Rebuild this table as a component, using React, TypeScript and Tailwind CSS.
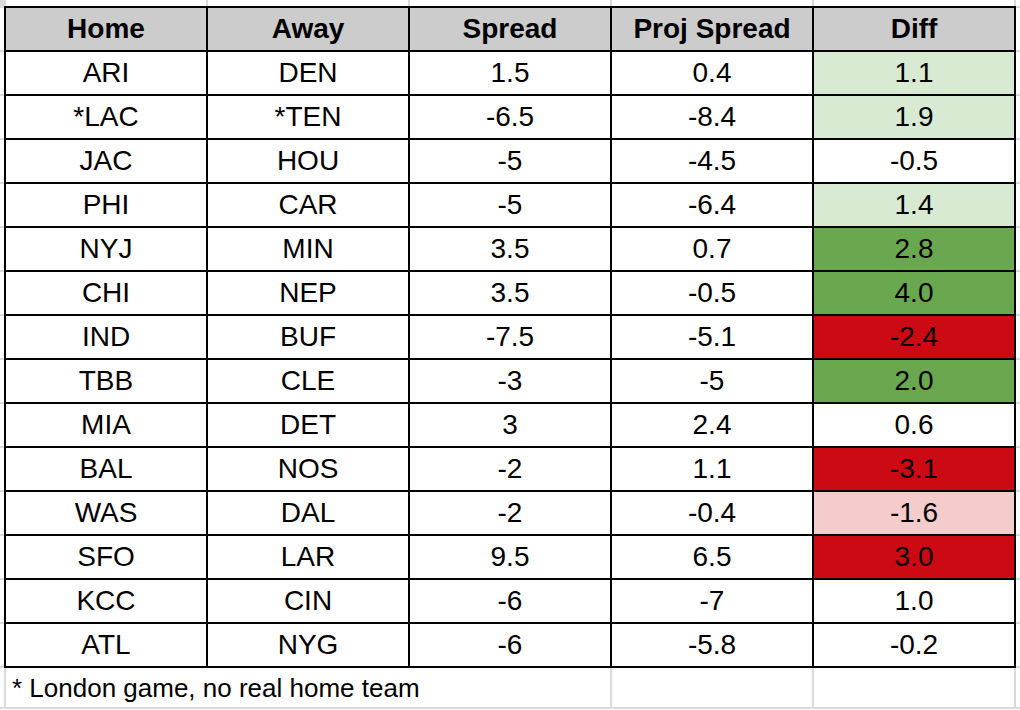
const rows: [string, string, string, string, string, string][] = [
  ["ARI", "DEN", "1.5", "0.4", "1.1", "bg-[#d9ead3]"],
  ["*LAC", "*TEN", "-6.5", "-8.4", "1.9", "bg-[#d9ead3]"],
  ["JAC", "HOU", "-5", "-4.5", "-0.5", "bg-white"],
  ["PHI", "CAR", "-5", "-6.4", "1.4", "bg-[#d9ead3]"],
  ["NYJ", "MIN", "3.5", "0.7", "2.8", "bg-[#6aa84f]"],
  ["CHI", "NEP", "3.5", "-0.5", "4.0", "bg-[#6aa84f]"],
  ["IND", "BUF", "-7.5", "-5.1", "-2.4", "bg-[#cc0a14]"],
  ["TBB", "CLE", "-3", "-5", "2.0", "bg-[#6aa84f]"],
  ["MIA", "DET", "3", "2.4", "0.6", "bg-white"],
  ["BAL", "NOS", "-2", "1.1", "-3.1", "bg-[#cc0a14]"],
  ["WAS", "DAL", "-2", "-0.4", "-1.6", "bg-[#f4cccc]"],
  ["SFO", "LAR", "9.5", "6.5", "3.0", "bg-[#cc0a14]"],
  ["KCC", "CIN", "-6", "-7", "1.0", "bg-white"],
  ["ATL", "NYG", "-6", "-5.8", "-0.2", "bg-white"],
];

const headers = ["Home", "Away", "Spread", "Proj Spread", "Diff"];

export default function App() {
  return (
    <div className="w-[1020px] h-[710px] bg-white flex flex-col font-['Liberation_Sans',Arial,sans-serif] text-black overflow-hidden">
      {/* spreadsheet gridlines above the table */}
      <div className="h-[6px] grid grid-cols-[4px_2px_200px_2px_200px_2px_200px_2px_200px_2px_200px_2px_4px]">
        <div className="bg-[#dadada]" />
        <div className="bg-[#dadada]" />
        <div />
        <div className="bg-[#dadada]" />
        <div />
        <div className="bg-[#dadada]" />
        <div />
        <div className="bg-[#dadada]" />
        <div />
        <div className="bg-[#dadada]" />
        <div />
        <div className="bg-[#dadada]" />
        <div />
      </div>

      <div className="flex">
        <div className="w-[4px] bg-[repeating-linear-gradient(to_bottom,#dadada_0,#dadada_2px,#ffffff_2px,#ffffff_44px)]" />
        <div className="w-[1012px] grid grid-cols-5 auto-rows-[42px] gap-[2px] p-[2px] bg-black">
          {headers.map((h) => (
            <div key={h} className="bg-[#cccccc] flex items-center justify-center text-[28px] font-bold leading-none">
              {h}
            </div>
          ))}
          {rows.map((r) => (
            <>
              <div key={r[0] + "h"} className="bg-white flex items-center justify-center text-[28px] leading-none">{r[0]}</div>
              <div key={r[0] + "a"} className="bg-white flex items-center justify-center text-[28px] leading-none">{r[1]}</div>
              <div key={r[0] + "s"} className="bg-white flex items-center justify-center text-[28px] leading-none">{r[2]}</div>
              <div key={r[0] + "p"} className="bg-white flex items-center justify-center text-[28px] leading-none">{r[3]}</div>
              <div key={r[0] + "d"} className={`${r[5]} flex items-center justify-center text-[28px] leading-none`}>{r[4]}</div>
            </>
          ))}
        </div>
        <div className="w-[4px] bg-[repeating-linear-gradient(to_bottom,#dadada_0,#dadada_2px,#ffffff_2px,#ffffff_44px)]" />
      </div>

      {/* note row */}
      <div className="h-[39px] grid grid-cols-[4px_2px_604px_2px_200px_2px_200px_2px_4px]">
        <div />
        <div className="bg-[#dadada]" />
        <div className="flex items-center pl-[6px] text-[26px] leading-none">* London game, no real home team</div>
        <div className="bg-[#dadada]" />
        <div />
        <div className="bg-[#dadada]" />
        <div />
        <div className="bg-[#dadada]" />
        <div />
      </div>
      <div className="h-[2px] bg-[#dadada]" />
    </div>
  );
}
